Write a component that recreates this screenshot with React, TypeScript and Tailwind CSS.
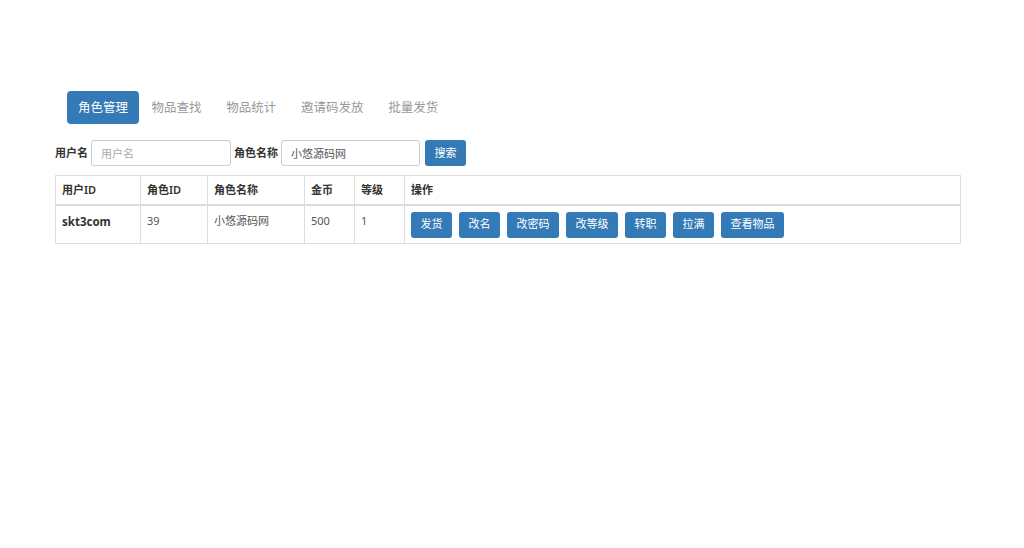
import React from 'react';

const font = { fontFamily: '"Noto Sans", "Noto Sans CJK SC", sans-serif' };

const tabs = ['角色管理', '物品查找', '物品统计', '邀请码发放', '批量发货'];
const actions = ['发货', '改名', '改密码', '改等级', '转职', '拉满', '查看物品'];

export default function App() {
  return (
    <div className="h-[548px] w-[1024px] bg-white text-[#333]" style={font}>
      <div className="pl-[55px] pt-[91px] pr-[63px]">
        <ul className="flex items-center pl-[12px]">
          {tabs.map((t, i) => (
            <li key={t}>
              <a
                className={
                  i === 0
                    ? 'block h-[33px] rounded-[4px] bg-[#337ab7] px-[11px] text-[12.5px] leading-[33px] text-white'
                    : 'block h-[33px] px-[12.4px] text-[12.5px] leading-[33px] text-[#999]'
                }
              >
                {t}
              </a>
            </li>
          ))}
        </ul>

        <form className="mt-[16px] flex items-center">
          <label className="mr-[3px] text-[11px] font-bold">用户名</label>
          <input
            className="h-[26px] w-[140px] rounded-[3px] border border-[#ccc] px-[9px] text-[11px] placeholder:text-[#aaa] outline-none"
            placeholder="用户名"
          />
          <label className="ml-[3px] mr-[3px] text-[11px] font-bold">角色名称</label>
          <input
            className="h-[26px] w-[139px] rounded-[3px] border border-[#ccc] px-[9px] text-[11px] text-[#555] outline-none"
            defaultValue="小悠源码网"
          />
          <button
            type="button"
            className="ml-[5px] h-[26px] w-[41px] rounded-[3px] bg-[#337ab7] text-[11px] text-white"
          >
            搜索
          </button>
        </form>

        <table className="mt-[9px] w-[906px] border-collapse border border-[#ddd] text-[11px]">
          <thead>
            <tr className="h-[29px] border-b-2 border-[#ddd] text-left">
              <th className="w-[85px] border border-[#ddd] px-[6px] font-semibold">用户ID</th>
              <th className="w-[67px] border border-[#ddd] px-[6px] font-semibold">角色ID</th>
              <th className="w-[97px] border border-[#ddd] px-[6px] font-semibold">角色名称</th>
              <th className="w-[50px] border border-[#ddd] px-[6px] font-semibold">金币</th>
              <th className="w-[50px] border border-[#ddd] px-[6px] font-semibold">等级</th>
              <th className="border border-[#ddd] px-[6px] font-semibold">操作</th>
            </tr>
          </thead>
          <tbody>
            <tr className="h-[39px] align-top">
              <td className="border border-[#ddd] px-[6px] pt-[7px] text-[11.5px] font-bold">skt3com</td>
              <td className="border border-[#ddd] px-[6px] pt-[7px] text-[#555]">39</td>
              <td className="border border-[#ddd] px-[6px] pt-[7px] text-[#555]">小悠源码网</td>
              <td className="border border-[#ddd] px-[6px] pt-[7px] text-[#555]">500</td>
              <td className="border border-[#ddd] px-[6px] pt-[7px] text-[#555]">1</td>
              <td className="border border-[#ddd] px-[6px] pt-[6px]">
                <div className="flex gap-[7px]">
                  {actions.map((a) => (
                    <button
                      key={a}
                      type="button"
                      className="h-[26px] rounded-[3px] bg-[#337ab7] px-[9.5px] text-[11px] text-white"
                    >
                      {a}
                    </button>
                  ))}
                </div>
              </td>
            </tr>
          </tbody>
        </table>
      </div>
    </div>
  );
}
